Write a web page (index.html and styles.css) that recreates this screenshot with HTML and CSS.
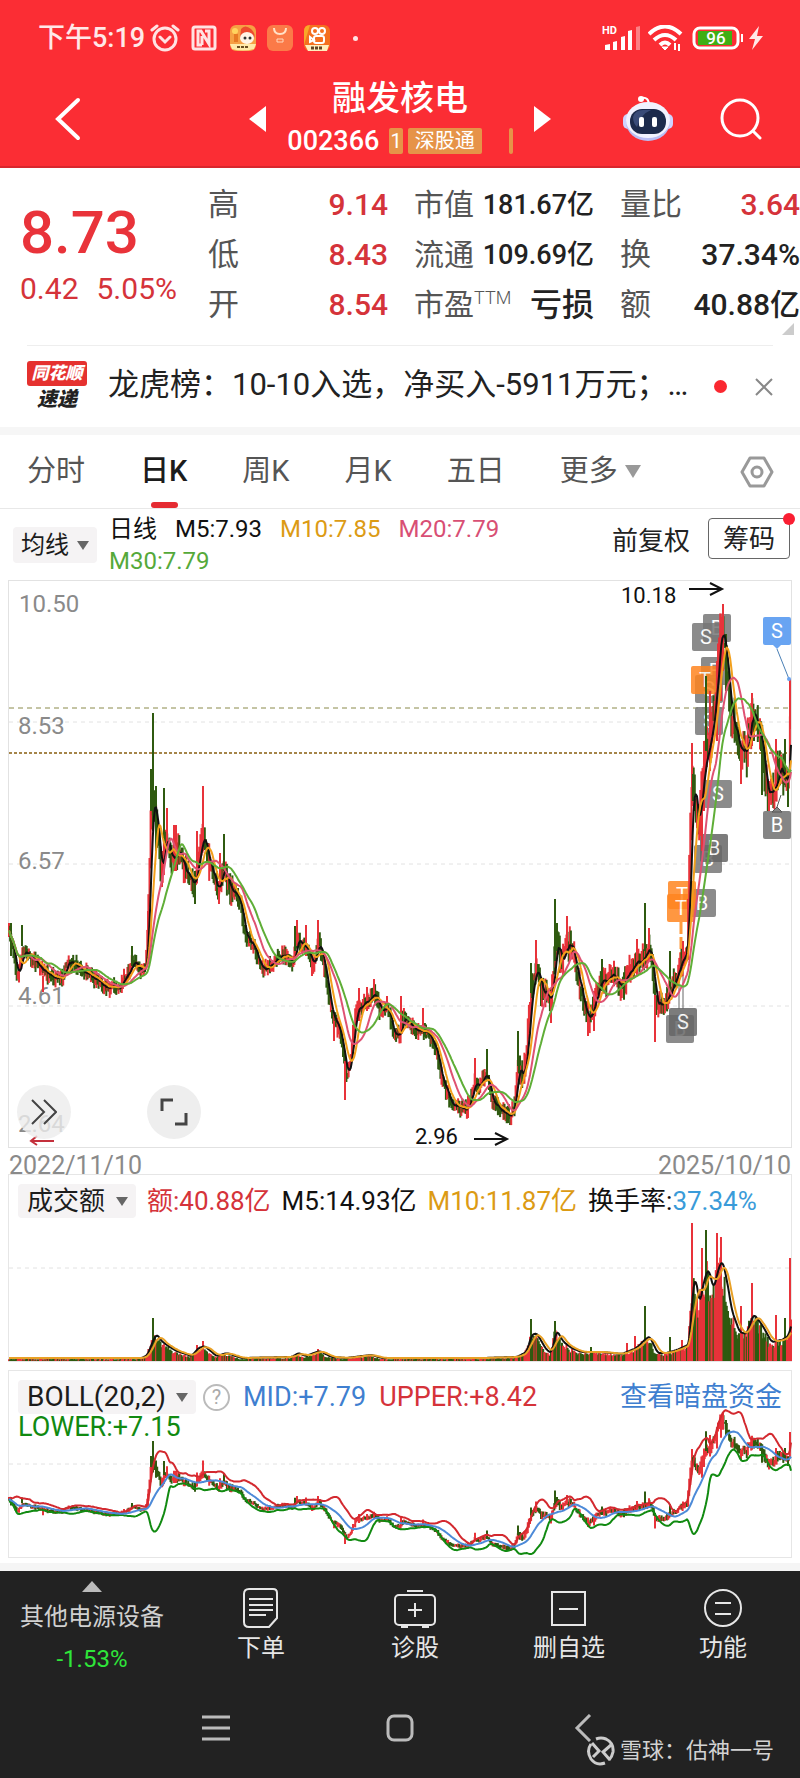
FILE: index.html
```
<!DOCTYPE html>
<html lang="zh-CN">
<head>
  <meta charset="UTF-8">
  <meta name="viewport" content="width=device-width, initial-scale=1.0">
  <title>融发核电 002366</title>
  <link rel="stylesheet" href="styles.css">
</head>
<body>
  <header class="top">
    <div class="status">
      <span class="time">下午5:19</span>
      <svg width="30" height="28" viewBox="0 0 30 28" fill="none" stroke="#ffe3e3" stroke-width="3" stroke-linecap="round">
        <circle cx="15" cy="15" r="11"/><path d="M2 6l5-4M28 6l-5-4M10 13l5 5 5-5"/>
      </svg>
      <svg class="nfc" width="26" height="26" viewBox="0 0 26 26" fill="none" stroke="#ffe3e3" stroke-width="3">
        <rect x="2" y="2" width="22" height="22" rx="2"/><path d="M11 20H7V6h3l8 13V6h-4M11 11v9"/>
      </svg>
      <svg class="app" width="26" height="26" viewBox="0 0 26 26">
        <rect width="26" height="26" rx="6" fill="#f6a044"/>
        <path d="M11 4q4-5 10 0q5 5 3 9H10z" fill="#ed4a2f"/>
        <circle cx="5" cy="6" r="3" fill="#ffd45e"/><path d="M4 9h4v8H4z" fill="#e77a24"/>
        <ellipse cx="17" cy="13" rx="7" ry="6" fill="#fff4e5"/>
        <circle cx="15" cy="13" r="1.500" fill="#333"/><circle cx="20" cy="13" r="1.500" fill="#333"/>
        <path d="M0 19h26l-2 5q-11 3-22 0z" fill="#ffe9a8"/><path d="M7 22h12" stroke="#6c4d20" stroke-width="2" stroke-dasharray="3 1"/>
      </svg>
      <svg class="app" width="26" height="26" viewBox="0 0 26 26" fill="none">
        <rect width="26" height="26" rx="6" fill="#fb7a48"/>
        <path d="M7 3q0 6 6 6t6-6" stroke="#ffe1c8" stroke-width="2"/><path d="M10 14h6v3h-6z" stroke="#ffd9bd"/>
      </svg>
      <svg class="app" width="26" height="26" viewBox="0 0 26 26" fill="none">
        <rect width="26" height="26" rx="6" fill="#f5701f"/>
        <path d="M0 20V6q0-6 6-6z" fill="#f8a928"/>
        <g stroke="#fff" stroke-width="2"><circle cx="11" cy="6" r="3"/><circle cx="18" cy="6" r="3"/><rect x="10" y="11" width="10" height="7" rx="2"/><path d="M10 15l-4-3v5z"/></g>
        <path d="M1 20h24l-2 6H4z" fill="#ffeebd"/><path d="M7 23h12" stroke="#5f4426" stroke-width="3" stroke-dasharray="3 1"/>
      </svg>
      <span class="dot"></span>
      <div class="status-right">
        <svg width="38" height="26" viewBox="0 0 38 26" fill="#fff">
          <text x="0" y="9" font-size="11" font-weight="700">HD</text>
          <path d="M3 20l5-1v6H3zM11 17l4-1v9h-4zM19 12l4-1v14h-4zM26 6l4-1v20h-4z"/>
          <path d="M34 2l4-1v24h-4z" opacity=".4"/>
        </svg>
        <svg width="36" height="26" viewBox="0 0 36 26" fill="none" stroke="#fff" stroke-width="4">
          <path d="M1 9q16-15 32 0M6 15q11-10 22 0M12 20q5-5 10 0"/><path d="M14 22h6l-3 3z" fill="#fff" stroke-width="1"/><path d="M27 18v7M31 19v7" stroke-width="2"/>
        </svg>
        <svg width="52" height="24" viewBox="0 0 52 24">
          <rect x="2" y="2" width="44" height="20" rx="6" fill="none" stroke="#fff" stroke-width="3"/>
          <rect x="6" y="5" width="34" height="14" fill="#3fae14"/><path d="M49 8h2v8h-2z" fill="#fff"/>
          <text x="24" y="18" font-size="17" font-weight="500" text-anchor="middle" fill="#fff">96</text>
        </svg>
        <svg width="14" height="24" viewBox="0 0 14 24"><path d="M10 0L0 13h6L3 24l11-14H8z" fill="#ffe8e8"/></svg>
      </div>
    </div>
    <div class="titlebar">
      <button class="plain back" aria-label="返回">
        <svg width="28" height="44" viewBox="0 0 28 44" fill="none" stroke="#fff" stroke-width="4" stroke-linecap="round"><path d="M24 3L4 22l20 19"/></svg>
      </button>
      <div class="center">
        <button class="plain" aria-label="上一只"><svg width="17" height="26" viewBox="0 0 17 26"><path d="M17 0v26L0 13z" fill="#fff"/></svg></button>
        <div class="stock">
          <h1>融发核电</h1>
          <div class="code"><span>002366</span><span class="tag cut">1</span><span class="tag">深股通</span><span class="tag sliver"></span></div>
        </div>
        <button class="plain" aria-label="下一只"><svg width="17" height="26" viewBox="0 0 17 26"><path d="M0 0v26l17-13z" fill="#fff"/></svg></button>
      </div>
      <div class="tools">
        <button class="plain" aria-label="智能助手">
          <svg width="50" height="48" viewBox="0 0 50 48">
            <path d="M18 3q8-2 8 8" fill="none" stroke="#fff" stroke-width="2"/><circle cx="18" cy="4" r="3" fill="#fff"/>
            <rect y="19" width="10" height="15" rx="5" fill="#cfd3ff"/><rect x="40" y="19" width="10" height="15" rx="5" fill="#cfd3ff"/>
            <ellipse cx="25" cy="27" rx="22" ry="19" fill="#b9bef5"/><ellipse cx="25" cy="25" rx="22" ry="18" fill="#f1f2ff"/>
            <rect x="7" y="14" width="36" height="25" rx="12" fill="#1c2a4c"/><path d="M10 22q2-7 10-7h8q-10 4-14 17-4-4-4-10z" fill="#394b78"/>
            <rect x="16" y="22" width="5" height="10" rx="2" fill="#fff"/><rect x="29" y="22" width="5" height="10" rx="2" fill="#fff"/>
          </svg>
        </button>
        <button class="plain" aria-label="搜索">
          <svg width="42" height="42" viewBox="0 0 42 42" fill="none" stroke="#fff" stroke-width="3" stroke-linecap="round"><circle cx="20" cy="20" r="18"/><path d="M33 33l7 7"/></svg>
        </button>
      </div>
    </div>
  </header>

  <section class="quote">
    <div class="price">
      <strong>8.73</strong>
      <p><span>0.42</span><span>5.05%</span></p>
    </div>
    <dl>
      <div><dt>高</dt><dd class="up">9.14</dd></div>
      <div><dt>低</dt><dd class="up">8.43</dd></div>
      <div><dt>开</dt><dd class="up">8.54</dd></div>
    </dl>
    <dl class="wide">
      <div><dt>市值</dt><dd>181.67亿</dd></div>
      <div><dt>流通</dt><dd>109.69亿</dd></div>
      <div><dt>市盈<sup>TTM</sup></dt><dd class="loss">亏损</dd></div>
    </dl>
    <dl>
      <div><dt>量比</dt><dd class="up">3.64</dd></div>
      <div><dt>换</dt><dd>37.34%</dd></div>
      <div><dt>额</dt><dd>40.88亿</dd></div>
    </dl>
    <span class="corner"></span>
  </section>

  <section class="news">
    <div class="news-logo"><b>同花顺</b><i>速递</i></div>
    <a href="#">龙虎榜：10-10入选，净买入-5911万元；…</a>
    <span class="red-dot"></span>
    <button class="plain" aria-label="关闭"><svg width="18" height="18" viewBox="0 0 18 18" stroke="#888" stroke-width="2"><path d="M1 1l16 16M17 1L1 17"/></svg></button>
  </section>

  <nav class="tabs">
    <a href="#">分时</a>
    <a href="#" class="active">日K</a>
    <a href="#">周K</a>
    <a href="#">月K</a>
    <a href="#">五日</a>
    <a href="#">更多<svg width="16" height="13" viewBox="0 0 16 13"><path d="M0 0h16L8 13z" fill="#999"/></svg></a>
    <button class="plain" aria-label="设置">
      <svg width="34" height="32" viewBox="0 0 34 32" fill="none" stroke="#999" stroke-width="3" stroke-linejoin="round"><path d="M10 2h14l8 14-8 14H10L2 16z"/><circle cx="17" cy="16" r="5"/></svg>
    </button>
  </nav>

  <section class="legend">
    <div class="drop"><select aria-label="主图指标"><option>均线</option></select></div>
    <div class="values">
      <span>日线</span><span>M5:7.93</span><span class="m10">M10:7.85</span><span class="m20">M20:7.79</span><span class="m30">M30:7.79</span>
    </div>
    <div class="legend-right">
      <button class="plain">前复权</button>
      <button class="chips">筹码</button>
    </div>
  </section>

  <section class="kline">
    <svg id="kline" viewBox="9 580 782 566"></svg>
    <button class="round expand" aria-label="展开"><svg width="26" height="26" viewBox="0 0 26 26" fill="none" stroke="#444" stroke-width="2"><path d="M1 1l12 12L1 25M13 1l12 12-12 12"/></svg></button>
    <button class="round full" aria-label="全屏"><svg width="28" height="28" viewBox="0 0 28 28" fill="none" stroke="#444" stroke-width="3"><path d="M2 13V2h11M26 15v11H15"/></svg></button>
  </section>
  <div class="dates"><span>2022/11/10</span><span>2025/10/10</span></div>

  <section class="panel volume">
    <svg id="volume" viewBox="9 1175 782 186"></svg>
    <div class="panel-head">
      <div class="drop"><select aria-label="成交指标"><option>成交额</option></select></div>
      <span class="up">额:40.88亿</span><span>M5:14.93亿</span><span class="m10">M10:11.87亿</span><span>换手率:<em>37.34%</em></span>
    </div>
  </section>

  <section class="panel boll">
    <svg id="boll" viewBox="9 1371 782 186"></svg>
    <div class="panel-head">
      <div class="drop"><select aria-label="副图指标"><option>BOLL(20,2)</option></select></div>
      <button class="help" aria-label="说明">?</button>
      <span class="mid">MID:+7.79</span><span class="up">UPPER:+8.42</span>
      <a href="#">查看暗盘资金</a>
      <span class="lower">LOWER:+7.15</span>
    </div>
  </section>

  <footer>
    <nav class="actions">
      <a href="#" class="sector"><svg width="20" height="11" viewBox="0 0 20 11"><path d="M0 11L10 0l10 11z" fill="#bbb"/></svg><span>其他电源设备</span><b>-1.53%</b></a>
      <a href="#"><svg width="40" height="40" viewBox="0 0 40 40"><path d="M8 1h24q4 0 4 4v25l-8 9H8q-5 0-5-5V6q0-5 5-5zM8 11h24M8 17h24M8 22h24M8 27h17"/></svg><span>下单</span></a>
      <a href="#"><svg width="42" height="40" viewBox="0 0 42 40"><rect x="1" y="7" width="40" height="30" rx="4"/><path d="M13 3h16M14 22h14M21 15v14M7 39h7M28 39h7"/></svg><span>诊股</span></a>
      <a href="#"><svg width="40" height="40" viewBox="0 0 40 40"><path d="M3 4h33v33H3zM10 21h19"/></svg><span>删自选</span></a>
      <a href="#"><svg width="40" height="40" viewBox="0 0 40 40"><circle cx="20" cy="20" r="18"/><path d="M12 15h16M12 26h16"/></svg><span>功能</span></a>
    </nav>
    <div class="system">
      <button class="plain" aria-label="菜单"><svg width="28" height="28" viewBox="0 0 28 28"><path d="M0 3h28M0 14h28M0 25h28"/></svg></button>
      <button class="plain" aria-label="主页"><svg width="28" height="28" viewBox="0 0 28 28"><rect x="2" y="2" width="24" height="24" rx="6"/></svg></button>
      <button class="plain" aria-label="后退"><svg width="28" height="28" viewBox="0 0 28 28"><path d="M20 1L7 14l13 13"/></svg></button>
    </div>
    <p class="author">
      <svg width="30" height="30" viewBox="0 0 30 30" fill="none" stroke="#ccc" stroke-width="3"><path d="M10 3Q15 1 20 3Q28 7 27 16Q26 21 23 24M19 27Q10 30 5 23Q0 15 5 8"/><path d="M6 7l7 8-6 6M25 9l-8 7 7 8"/></svg>
      雪球：估神一号
    </p>
  </footer>
  <script src="chart.js"></script>
</body>
</html>
```

FILE: styles.css
```
* {
  box-sizing: border-box;
}

body {
  margin: 0;
  background: #fff;
  color: #222;
  font-family: Roboto, "Noto Sans CJK SC", sans-serif;
}

svg {
  display: block;
  flex: none;
}

a {
  color: inherit;
  text-decoration: none;
}

button,
select {
  font: inherit;
  color: inherit;
}

.plain {
  padding: 0;
  border: 0;
  background: none;
}

.up {
  color: #d5333a;
}

/* header */
.top {
  height: 168px;
  background: #fb2d34;
  color: #fff;
  border-bottom: 2px solid #d8262d;
}

.status {
  display: flex;
  align-items: center;
  height: 76px;
  padding: 0 37px 0 38px;
}

.time {
  margin-right: 5px;
  font-size: 27px;
  line-height: 34px;
  font-weight: 500;
  color: #ffe8e8;
}

.nfc {
  margin: 0 13px 0 11px;
}

.app {
  margin-right: 11px;
}

.dot {
  width: 5px;
  height: 5px;
  margin-left: 12px;
  border-radius: 50%;
  background: #ffe3e3;
}

.status-right {
  display: flex;
  align-items: center;
  gap: 8px;
  margin-left: auto;
}

.status-right svg:last-child {
  margin-left: -3px;
}

.titlebar {
  display: grid;
  grid-template-columns: 1fr auto 1fr;
  align-items: center;
  height: 84px;
}

.back {
  justify-self: start;
  margin-left: 54px;
}

.center {
  display: flex;
  align-items: center;
  gap: 21px;
}

.stock {
  text-align: center;
}

h1 {
  margin: 0;
  font-size: 34px;
  line-height: 44px;
  font-weight: 500;
}

.code {
  display: flex;
  align-items: center;
  gap: 5px;
  font-size: 27px;
  line-height: 42px;
  font-weight: 500;
}

.tag {
  height: 26px;
  padding: 0 7px;
  border-radius: 2px;
  background: #e69348;
  font-size: 20px;
  line-height: 26px;
  font-weight: 400;
}

.cut {
  margin-left: 5px;
  padding: 0 1px;
}

.sliver {
  width: 4px;
  padding: 0;
  margin-left: 22px;
}

.tools {
  display: flex;
  align-items: center;
  justify-content: flex-end;
  gap: 47px;
  padding-right: 38px;
}

/* quote */
.quote {
  position: relative;
  display: grid;
  grid-template-columns: 162px 1fr 1fr 1fr;
  column-gap: 26px;
  padding: 12px 0 15px 20px;
}

.price {
  color: #e9333a;
  white-space: nowrap;
}

.price strong {
  display: block;
  padding-top: 18px;
  font-size: 60px;
  line-height: 70px;
  font-weight: 500;
}

.price p {
  display: flex;
  gap: 18px;
  margin: 0;
  font-size: 30px;
  line-height: 42px;
  color: #d5333a;
}

.quote dl {
  margin: 0;
}

.quote dl div {
  display: flex;
  justify-content: space-between;
  height: 50px;
  line-height: 50px;
  white-space: nowrap;
}

.quote dt {
  font-size: 31px;
  color: #555;
}

.quote dd {
  margin: 0;
  font-size: 30px;
  font-weight: 500;
}

.quote .wide dt {
  font-size: 30px;
}

.quote .wide dd {
  font-size: 27px;
}

.quote .wide .loss {
  font-size: 32px;
}

sup {
  font-size: 18px;
  font-weight: 300;
  line-height: 0;
}

.corner {
  position: absolute;
  right: 6px;
  bottom: 10px;
  border-left: 12px solid transparent;
  border-bottom: 12px solid #ccc;
}

/* news */
.news {
  display: flex;
  align-items: center;
  height: 82px;
  margin: 0 27px;
  border-top: 1px solid #eee;
}

.news-logo {
  width: 60px;
  margin-right: 21px;
  text-align: center;
}

.news-logo b {
  display: block;
  border-radius: 3px;
  background: #e5312f;
  color: #fff;
  font-size: 17px;
  line-height: 25px;
  font-weight: 900;
  font-style: italic;
}

.news-logo i {
  display: block;
  font-size: 20px;
  line-height: 26px;
  font-weight: 900;
}

.news a {
  flex: 1;
  overflow: hidden;
  white-space: nowrap;
  text-overflow: ellipsis;
  font-size: 31px;
  line-height: 44px;
  padding-bottom: 4px;
}

.red-dot {
  width: 13px;
  height: 13px;
  margin: 0 28px 0 8px;
  border-radius: 50%;
  background: #fa2830;
}

/* period tabs */
.tabs {
  display: flex;
  align-items: center;
  gap: 55px;
  height: 82px;
  padding: 0 26px 0 27px;
  border-top: 8px solid #f6f6f6;
  border-bottom: 1px solid #e8e8e8;
  font-size: 29px;
  line-height: 73px;
  color: #555;
}

.tabs a {
  display: flex;
  align-items: center;
  gap: 7px;
}

.tabs .active {
  position: relative;
  font-weight: 500;
  color: #1c1c1c;
}

.tabs .active::after {
  content: "";
  position: absolute;
  left: 50%;
  bottom: 0;
  width: 27px;
  height: 6px;
  margin-left: -13px;
  border-radius: 3px;
  background: #e52b32;
}

.tabs button {
  margin-left: auto;
}

/* main chart */
.legend {
  display: flex;
  align-items: center;
  height: 71px;
  padding: 0 10px 0 13px;
}

.drop {
  position: relative;
  border-radius: 4px;
  background: #f5f3f4;
}

.drop::after {
  content: "";
  position: absolute;
  right: 8px;
  top: 50%;
  margin-top: -4px;
  border: 6px solid transparent;
  border-top: 9px solid #666;
  border-bottom: 0;
}

.drop select {
  display: block;
  padding: 0 28px 0 8px;
  border: 0;
  background: none;
  appearance: none;
  font-size: 24px;
  line-height: 36px;
  color: #1c1c1c;
}

.values {
  display: flex;
  flex: 1;
  flex-wrap: wrap;
  column-gap: 18px;
  margin: 0 12px;
  font-size: 24px;
  line-height: 32px;
  color: #111;
}

.m10 {
  color: #dc9b14;
}

.values .m20 {
  color: #d84f74;
}

.values .m30 {
  color: #55a93a;
}

.legend-right {
  display: flex;
  align-items: center;
  gap: 18px;
  padding-bottom: 12px;
  font-size: 26px;
}

.chips {
  position: relative;
  height: 41px;
  padding: 0 14px;
  border: 1px solid #666;
  border-radius: 4px;
  background: #fff;
  line-height: 36px;
}

.chips::after {
  content: "";
  position: absolute;
  right: -6px;
  top: -6px;
  width: 12px;
  height: 12px;
  border-radius: 50%;
  background: #fa1e32;
}

.kline {
  position: relative;
  margin: 0 8px;
  border: 1px solid #e2e2e2;
}

.kline > svg,
.panel > svg {
  width: 100%;
  height: auto;
  overflow: visible;
}

.round {
  position: absolute;
  bottom: 8px;
  display: flex;
  align-items: center;
  justify-content: center;
  width: 54px;
  height: 54px;
  padding: 0;
  border: 0;
  border-radius: 50%;
  background: rgba(236, 236, 236, 0.8);
}

.expand {
  left: 1%;
}

.full {
  left: 138px;
  background: #eee;
}

.dates {
  display: flex;
  justify-content: space-between;
  height: 26px;
  margin: 0 9px;
  font-size: 25px;
  line-height: 35px;
  color: #8a8a8a;
}

/* sub charts */
.panel {
  display: grid;
  margin: 0 8px;
  border: 1px solid #e6e6e6;
}

.panel > * {
  grid-area: 1 / 1;
}

.panel-head {
  display: flex;
  flex-wrap: wrap;
  align-items: center;
  align-content: flex-start;
  column-gap: 11px;
  z-index: 1;
  padding: 9px;
  font-size: 26px;
  line-height: 34px;
  color: #111;
}

.panel-head .drop select {
  padding: 0 30px 0 9px;
  font-size: 26px;
  line-height: 34px;
}

.panel-head em {
  font-style: normal;
  color: #3a9bd9;
}

.panel-head .m10 {
  color: #dc9b14;
}

.panel-head .up {
  color: #d5333a;
}

.boll {
  margin-top: 8px;
}

.boll .panel-head {
  column-gap: 13px;
  font-size: 27px;
}

.boll .drop {
  margin-right: -6px;
}

.boll .drop select {
  font-size: 28px;
}

.help {
  width: 27px;
  height: 27px;
  padding: 0;
  border: 2px solid #bbb;
  border-radius: 50%;
  background: #fff;
  font-size: 20px;
  line-height: 22px;
  color: #aaa;
}

.boll .mid,
.boll a {
  color: #3f7fd0;
}

.boll a {
  margin-left: auto;
}

.boll .lower {
  width: 100%;
  line-height: 26px;
  color: #118a11;
}

/* bottom bars */
footer {
  position: relative;
  margin-top: 5px;
  border-top: 8px solid #f5f5f5;
  background: #222;
  color: #e6e6e6;
}

.actions {
  display: grid;
  grid-template-columns: 23% repeat(4, 1fr);
  height: 114px;
}

.actions a {
  display: flex;
  flex-direction: column;
  align-items: center;
  padding-top: 17px;
  font-size: 24px;
  line-height: 40px;
}

.actions a:not(.sector) svg,
.system svg {
  fill: none;
  stroke: #e6e6e6;
  stroke-width: 2;
}

.actions .sector {
  padding-top: 10px;
  line-height: 42px;
  color: #d0d0d0;
}

.sector span {
  margin-top: 4px;
}

.sector b {
  color: #2fe63a;
  font-weight: 400;
}

.system {
  display: flex;
  justify-content: center;
  gap: 156px;
  height: 93px;
  padding-bottom: 7px;
}

.system svg {
  stroke: #bbb;
  stroke-width: 3;
}

.author {
  position: absolute;
  right: 26px;
  bottom: 10px;
  display: flex;
  align-items: center;
  gap: 4px;
  margin: 0;
  font-size: 22px;
  line-height: 34px;
  color: #d2d2d2;
}
```

FILE: chart.js
```
// closing line of the daily bars, as x,y pairs in drawing units
const closes = [9,933, 12,940, 17,975, 23,950, 30,955, 38,965, 44,972, 60,978, 63,975, 67,960, 72,962, 80,966,
  90,975, 100,982, 107,986, 121,986, 128,970, 134,958, 140,970, 145,968, 147,945, 149,880, 151,800, 154,795,
  157,830, 162,880, 165,830, 168,845, 172,862, 178,850, 185,870, 195,885, 200,845, 204,835, 208,860, 218,890, 223,868,
  230,890, 240,900, 245,935, 253,945, 262,970, 275,960, 283,953, 293,962, 297,938, 305,945, 313,965, 319,940,
  325,970, 332,1015, 340,1032, 347,1075, 350,1060, 356,1010, 365,1002, 375,992, 380,1012, 388,1008, 393,1035,
  400,1032, 403,1014, 410,1025, 421,1030, 427,1030, 435,1045, 442,1080, 452,1104, 467,1108, 475,1080, 480,1085,
  486,1072, 492,1102, 502,1110, 510,1115, 514,1108, 518,1062, 523,1080, 527,1040, 532,985, 537,968, 541,990,
  548,995, 551,1005, 554,955, 558,940, 561,965, 567,945, 570,940, 577,970, 583,1005, 589,1018, 594,1005, 600,980,
  607,985, 612,972, 620,985, 626,975, 635,962, 645,955, 648,942, 652,960, 655,1002, 664,1005, 672,985, 680,965,
  687,950, 690,830, 693,770, 695,810, 699,820, 704,765, 710,735, 715,705, 718,650, 722,622, 725,650, 730,710,
  736,730, 741,752, 747,752, 752,705, 755,720, 760,735, 764,770, 769,798, 775,780, 781,765, 786,782, 789,770, 791,680];

// long shadows: x, top, bottom, rising
const spikes = [[11,922,955,0], [22,924,945,0], [43,975,991,1], [132,945,965,0], [148,910,960,1], [151,768,810,0],
  [153,712,830,0], [156,785,850,0], [164,787,840,0], [167,807,850,1], [174,824,870,1], [176,824,870,1], [162,850,886,1],
  [195,870,903,0], [203,785,850,1], [197,830,870,1], [224,833,870,0], [220,852,890,1], [219,880,903,1], [297,919,945,1],
  [295,925,950,0], [306,924,955,1], [318,919,950,1], [312,950,975,1], [345,1060,1099,1], [334,1020,1040,1], [359,987,1020,1], [367,986,1010,1],
  [374,978,1000,1], [387,995,1010,1], [401,995,1030,1], [423,1007,1030,1], [475,1057,1090,1], [487,1048,1080,0],
  [508,1105,1122,0], [518,1030,1065,0], [531,962,992,0], [536,939,980,1], [551,990,1022,1], [555,898,960,0],
  [557,922,950,0], [567,915,950,1], [588,1000,1035,1], [594,990,1030,1], [602,958,990,0], [637,938,975,1], [645,902,950,0],
  [649,927,960,1], [655,994,1041,1], [670,950,985,0], [683,940,965,1], [692,742,800,1], [693,773,800,0], [702,780,850,1],
  [704,740,810,1], [706,675,750,0], [710,690,770,1], [717,660,740,1], [721,618,700,1], [723,603,670,1], [726,633,690,0],
  [741,745,783,1], [752,692,745,1], [754,710,740,0], [761,725,750,0], [762,740,794,0], [769,780,819,1], [776,738,790,1], [785,738,780,0],
  [788,770,806,0], [790,678,728,1]];

// turnover: x, height
const amounts = [9,2, 140,2, 146,5, 150,16, 155,26, 160,19, 165,15, 175,9, 190,4, 197,12, 203,14, 215,4, 225,7, 240,2, 290,3,
  297,7, 304,4, 318,9, 330,3, 345,2, 360,4, 370,5, 380,2, 480,2, 515,3, 525,8, 530,25, 535,27, 545,10, 550,7, 555,30, 562,18, 570,12,
  580,8, 600,8, 620,6, 635,12, 643,20, 648,24, 656,7, 665,7, 675,10, 680,12, 688,16, 691,70, 694,85, 698,54, 702,78, 707,92, 712,70,
  717,92, 721,100, 726,76, 730,50, 738,28, 745,26, 752,46, 760,36, 770,18, 780,20, 787,24, 791,40];
const amountSpikes = [[153,43,0], [197,16,1], [203,20,1], [318,12,1], [531,42,0], [555,40,0], [591,14,0], [627,18,1], [635,25,1], [645,55,0], [670,24,0],
  [682,21,1], [692,138,1], [702,113,1], [706,131,0], [717,128,1], [721,124,1], [741,55,1], [752,78,1], [776,46,1], [785,43,0], [790,103,1]];

const BARS = 708;
const colors = ['#2f5a10', '#e8333a'];
let seed = 7;

function random() {
  seed = (seed * 16807) % 2147483647;
  return seed / 2147483647;
}

function at(list, x) {
  for (let i = 2; i < list.length; i += 2) {
    if (x <= list[i]) {
      const t = (x - list[i - 2]) / (list[i] - list[i - 2]);
      return list[i - 1] + (list[i + 1] - list[i - 1]) * t;
    }
  }
  return list[list.length - 1];
}

function average(list, n) {
  return list.map((v, i) => {
    const part = list.slice(Math.max(0, i - n + 1), i + 1);
    return part.reduce((a, b) => a + b, 0) / part.length;
  });
}

function line(list, color, width = 2) {
  const d = list.map((y, i) => (i ? 'L' : 'M') + xs[i].toFixed(1) + ' ' + y.toFixed(1)).join('');
  return `<path d="${d}" fill="none" stroke="${color}" stroke-width="${width}" stroke-linejoin="round"/>`;
}

function bars(list, width) {
  return list.map(b => `<path d="M${b[0].toFixed(1)} ${b[1].toFixed(1)}V${b[2].toFixed(1)}" stroke="${colors[b[3]]}" stroke-width="${width}"/>`).join('');
}

function grid(y, color = '#e2e2e2', dash = '4 4', width = 1) {
  return `<path d="M9 ${y}H791" stroke="${color}" stroke-width="${width}" stroke-dasharray="${dash}"/>`;
}

function label(x, y, text, color = '#8a8a8a', size = 24) {
  return `<text x="${x}" y="${y}" font-size="${size}" fill="${color}">${text}</text>`;
}

function marker(x, y, text, color = '#777', opacity = 0.85) {
  return `<g opacity="${opacity}"><rect x="${x}" y="${y}" width="28" height="28" rx="2" fill="${color}"/>` +
    `<text x="${x + 14}" y="${y + 21}" font-size="20" text-anchor="middle" fill="#fff">${text}</text></g>`;
}

const xs = [];
const close = [];
const candles = [];
for (let i = 0; i < BARS; i++) {
  const x = 9 + i * 782 / (BARS - 1);
  const y = at(closes, x);
  const noise = x > 690 ? 18 : x > 520 || (x > 146 && x < 235) ? 12 : 7;
  xs.push(x);
  close.push(y + (random() - 0.5) * noise);
  const prev = i ? close[i - 1] : y;
  candles.push([x, Math.min(prev, close[i]) - random() * noise - 1, Math.max(prev, close[i]) + random() * noise + 1,
    random() < 0.2 ? Math.round(random()) : +(close[i] <= prev)]);
}
candles.pop();

// price
document.getElementById('kline').innerHTML =
  grid(721) + grid(863) + grid(1005) + grid(707, '#8a8a4a', '5 4') + grid(752, '#a5854a', '3 2', 2) +
  label(19, 611, '10.50') + label(18, 733, '8.53') + label(18, 868, '6.57') + label(18, 1003, '4.61') + label(18, 1131, '2.64') +
  marker(703, 613, 'B') + marker(692, 622, 'S') + marker(701, 656, 'B') + marker(695, 674, 'S') + marker(691, 665, 'T', '#ff8520') +
  marker(695, 706, 'S') + marker(704, 779, 'S') + marker(694, 844, 'B') + marker(700, 833, 'B', '#666') + marker(688, 888, 'B') +
  marker(668, 880, 'T', '#ff8520') + marker(667, 893, 'T', '#ff8520') + marker(666, 1014, 'B') + marker(669, 1007, 'S', '#666') +
  '<path d="M681 921v55" stroke="#ff9a3c" stroke-width="3" stroke-dasharray="12 3"/><path d="M679 1008v-30M683 1008v-40" stroke="#666"/>' +
  bars(candles, 2) + bars(spikes, 2) +
  line(average(close, 5), '#111') + line(average(close, 10), '#f2a01c') +
  line(average(close, 20), '#df5273') + line(average(close, 30), '#5fae37') +
  marker(763, 616, 'S', '#68a4f2', 1) + marker(763, 810, 'B', '#858585', 1) +
  '<path d="M777 648l12 30" stroke="#4a7fb5"/><path d="M772 643h10l-5 5z" fill="#68a4f2"/><circle cx="789" cy="678" r="2" fill="#68a4f2"/>' +
  '<path d="M772 811h10l-5-5zM777 806l4-12" fill="#858585" stroke="#555"/>' +
  label(621, 602, '10.18', '#111', 22) + label(415, 1143, '2.96', '#111', 22) +
  '<path d="M689 588h33m-12-6l12 6-12 6M474 1138h33m-12-6l12 6-12 6" fill="none" stroke="#111" stroke-width="2"/>' +
  '<path d="M54 1140H31m6-5l-6 5 6 4" fill="none" stroke="#c4303c" stroke-width="2"/>';

// turnover
const amount = xs.map(x => Math.max(1, at(amounts, x)));
const volume = xs.map((x, i) => [x, 1361 - amount[i] * (0.7 + random() * 0.4), 1361, candles[i] ? candles[i][3] : 1]);
document.getElementById('volume').innerHTML = grid(1268) + bars(volume, 2) +
  bars(amountSpikes.map(s => [s[0], 1361 - s[1], 1361, s[2]]), 2) +
  line(average(amount, 4).map(v => 1360 - v), '#111') +
  line(average(amount, 9).map(v => 1360 - v), '#e9a126');

// bollinger bands, price scaled down to the panel
const scale = y => 1412 + (y - 603) * 0.266;
const mid = average(close, 20);
const spread = close.map((v, i) => {
  const part = close.slice(Math.max(0, i - 19), i + 1);
  return 2 * Math.sqrt(part.reduce((a, b) => a + (b - mid[i]) ** 2, 0) / part.length);
});
document.getElementById('boll').innerHTML = grid(1464) +
  bars(candles.concat(spikes).map(b => [b[0], scale(b[1]), scale(b[2]), b[3]]), 2) +
  line(mid.map((v, i) => scale(v - spread[i])), '#d3292f') +
  line(mid.map((v, i) => Math.min(1556, scale(v + spread[i]))), '#118a11') +
  line(mid.map(scale), '#4d8ad8');
```
